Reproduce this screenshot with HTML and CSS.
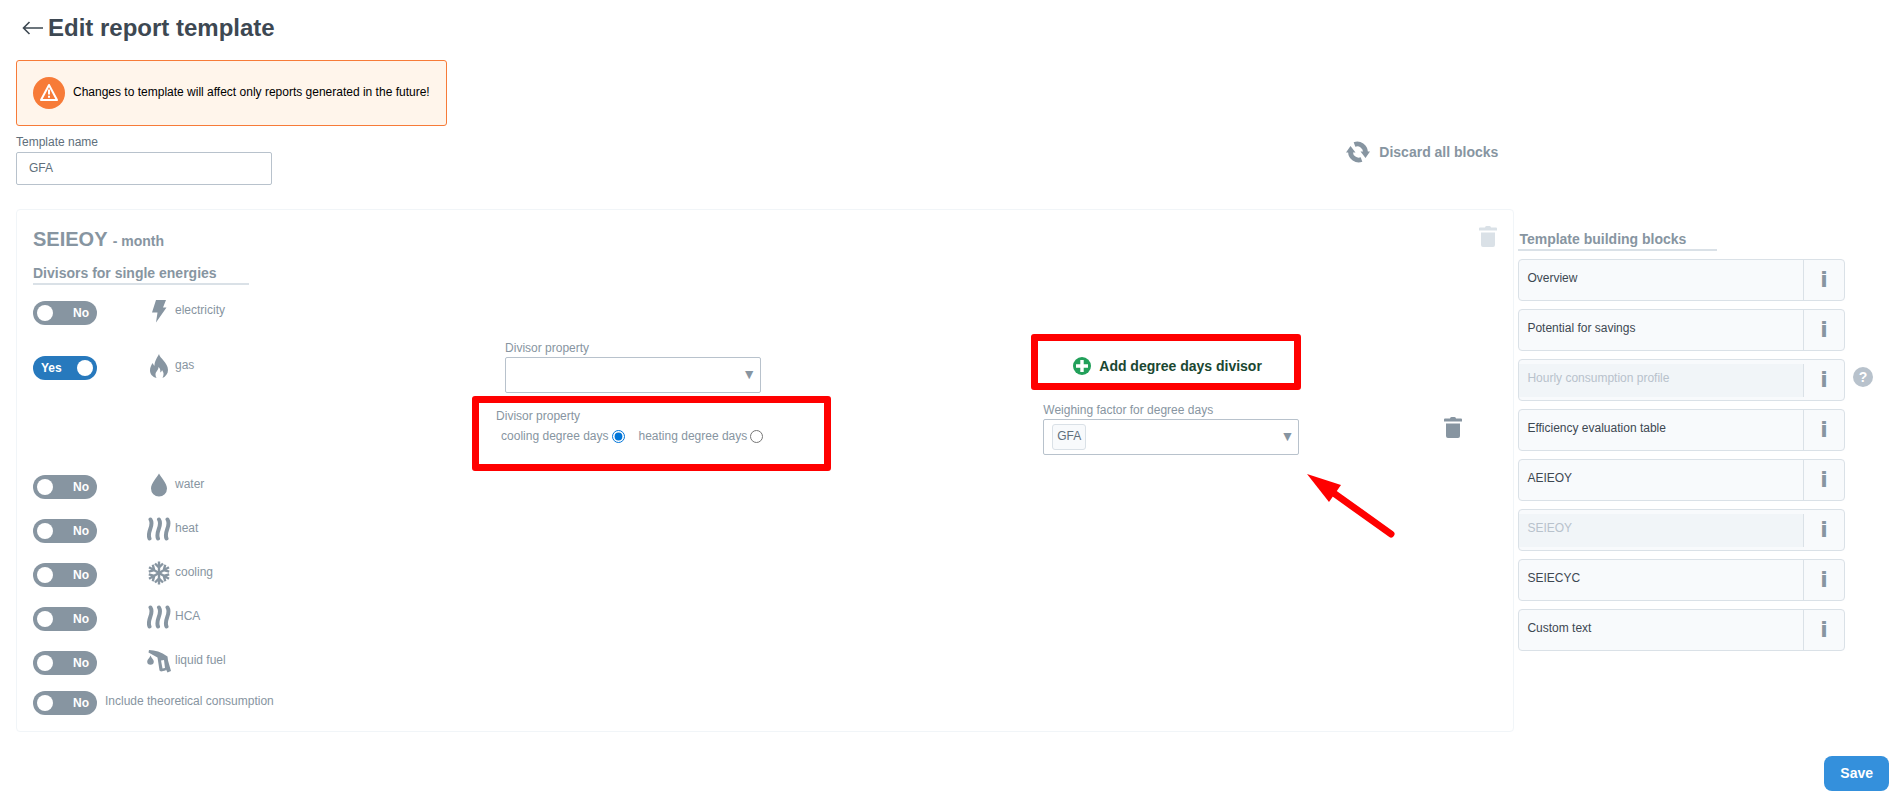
FILE: index.html
```
<!DOCTYPE html>
<html lang="en">
<head>
    <meta charset="UTF-8">
    <meta name="viewport" content="width=device-width, initial-scale=1.0">
    <title>Edit report template</title>
    <link rel="stylesheet" href="styles.css">
</head>
<body>
    <!-- Shared icons -->
    <svg class="icon-defs" aria-hidden="true">
        <symbol id="icon-trash" viewBox="0 0 18 21">
            <path d="M6 1.500Q6 0 7.500 0h3Q12 0 12 1.500h5q1 0 1 1V4.500H0V2.500q0-1 1-1zM2 6.500h14V19q0 2-2 2H4q-2 0-2-2z"/>
        </symbol>
        <symbol id="icon-waves" viewBox="0 0 24 24">
            <path d="M3.500 2.500c4 6-4 12-1 19M12 2.500c4 6-4 12-1 19M20.500 2.500c4 6-4 12-1 19" fill="none" stroke="currentColor" stroke-width="4" stroke-linecap="round"/>
        </symbol>
    </svg>

    <header class="page-header">
        <a class="back" href="#" aria-label="Back">
            <svg width="22" height="14" viewBox="0 0 22 14"><path d="M21 7H2M7.500 1L1.500 7l6 6" fill="none" stroke="currentColor" stroke-width="1.600"/></svg>
        </a>
        <h1>Edit report template</h1>
    </header>

    <div class="alert">
        <svg width="32" height="32" viewBox="0 0 32 32">
            <circle cx="16" cy="16" r="16" fill="#f77b38"/>
            <path d="M16 8L24 23H8z" fill="none" stroke="#fff" stroke-width="2" stroke-linejoin="round"/>
            <path d="M16 12.500v5M16 18.800v2" stroke="#fff" stroke-width="2"/>
        </svg>
        <p>Changes to template will affect only reports generated in the future!</p>
    </div>

    <div class="toolbar">
        <div class="field name-field">
            <label for="template_name">Template name</label>
            <input type="text" id="template_name" name="template_name" value="GFA">
        </div>
        <button type="button" class="link-button">
            <svg width="24" height="22" viewBox="0 0 24 22">
                <path d="M8.500 3.500A8.200 8.200 0 0 1 19.500 11M15.500 18.500A8.200 8.200 0 0 1 4.500 11" fill="none" stroke="currentColor" stroke-width="4.800"/>
                <path d="M14.500 10.500H24L19.500 17zM0 11.500h9.500L4.500 5z"/>
            </svg>
            Discard all blocks
        </button>
    </div>

    <div class="columns">
        <main class="panel">
            <div class="panel-header">
                <h2>SEIEOY <small>- month</small></h2>
                <button type="button" class="icon-button muted" aria-label="Remove block"><svg width="18" height="21"><use href="#icon-trash"/></svg></button>
            </div>
            <h3 class="section-title">Divisors for single energies</h3>

            <div class="energies">
                <div class="energy">
                    <label class="toggle"><input type="checkbox" aria-label="electricity"><span class="yes">Yes</span><span class="no">No</span></label>
                    <div class="energy-name">
                        <svg width="24" height="24" viewBox="0 0 24 24"><path d="M9 1h10l-3 7.500h3.500L9 23.500l1.500-10H5z"/></svg>
                        <span>electricity</span>
                    </div>
                </div>

                <div class="energy-group">
                    <div class="energy">
                        <label class="toggle"><input type="checkbox" aria-label="gas" checked><span class="yes">Yes</span><span class="no">No</span></label>
                        <div class="energy-name">
                            <svg width="24" height="24" viewBox="0 0 24 24"><path d="M12 0c.5 4 9 8.500 9 16 0 3.800-2.300 6.500-5.500 8 1.500-3 1.500-5.500-.5-8-.3 1.500-.8 2-1.700 2.400.3-2.200-.3-4.200-1.800-5.400 0 3.500-3 4.500-3 7.500 0 1.300.3 2.500 1 3.500C5.500 23 3 20 3 16.500c0-3 1.200-5.500 2.800-7.500.3 1.200.7 2 1.700 2.800C7.500 7 10.500 3 12 0z"/></svg>
                            <span>gas</span>
                        </div>
                        <div class="field property-field">
                            <label for="divisor_property">Divisor property</label>
                            <div class="select">
                                <select id="divisor_property" name="divisor_property"><option></option></select>
                            </div>
                        </div>
                        <div class="add-cell">
                            <button type="button" class="add-button">
                                <svg width="18" height="18" viewBox="0 0 18 18"><circle cx="9" cy="9" r="9" fill="#22a05a"/><path d="M9 3v12M3 9h12" stroke="#fff" stroke-width="3.400"/></svg>
                                Add degree days divisor
                            </button>
                            <span class="highlight"></span>
                        </div>
                    </div>

                    <div class="energy degree-days">
                        <fieldset>
                            <legend>Divisor property</legend>
                            <div class="radios">
                                <label>cooling degree days<input type="radio" name="degree_days" checked></label>
                                <label>heating degree days<input type="radio" name="degree_days"></label>
                            </div>
                            <span class="highlight"></span>
                        </fieldset>
                        <div class="field weight-field">
                            <label for="weight">Weighing factor for degree days</label>
                            <div class="select">
                                <select id="weight" name="weight"><option></option></select>
                                <span class="chip">GFA</span>
                            </div>
                            <svg class="pointer" width="90" height="66" viewBox="0 0 90 66"><path d="M28 20L84 60" stroke="#f00" stroke-width="7" stroke-linecap="round"/><path d="M0 0L34 11 22 28z" fill="#f00"/></svg>
                        </div>
                        <button type="button" class="icon-button" aria-label="Remove divisor"><svg width="18" height="21"><use href="#icon-trash"/></svg></button>
                    </div>
                </div>

                <div class="energy">
                    <label class="toggle"><input type="checkbox" aria-label="water"><span class="yes">Yes</span><span class="no">No</span></label>
                    <div class="energy-name">
                        <svg width="24" height="24" viewBox="0 0 24 24"><path d="M12 .500c2 4 8 9.500 8 15a8 8 0 0 1-16 0C4 10 10 4.500 12 .500z"/></svg>
                        <span>water</span>
                    </div>
                </div>
                <div class="energy">
                    <label class="toggle"><input type="checkbox" aria-label="heat"><span class="yes">Yes</span><span class="no">No</span></label>
                    <div class="energy-name">
                        <svg width="24" height="24"><use href="#icon-waves"/></svg>
                        <span>heat</span>
                    </div>
                </div>
                <div class="energy">
                    <label class="toggle"><input type="checkbox" aria-label="cooling"><span class="yes">Yes</span><span class="no">No</span></label>
                    <div class="energy-name">
                        <svg width="24" height="24" viewBox="0 0 24 24">
                            <g fill="none" stroke="currentColor" stroke-width="2.400">
                                <path d="M12 .500v23M8 2.500l4 4 4-4M8 21.500l4-4 4 4"/>
                                <path d="M12 .500v23M8 2.500l4 4 4-4M8 21.500l4-4 4 4" transform="rotate(60 12 12)"/>
                                <path d="M12 .500v23M8 2.500l4 4 4-4M8 21.500l4-4 4 4" transform="rotate(120 12 12)"/>
                            </g>
                        </svg>
                        <span>cooling</span>
                    </div>
                </div>
                <div class="energy">
                    <label class="toggle"><input type="checkbox" aria-label="HCA"><span class="yes">Yes</span><span class="no">No</span></label>
                    <div class="energy-name">
                        <svg width="24" height="24"><use href="#icon-waves"/></svg>
                        <span>HCA</span>
                    </div>
                </div>
                <div class="energy">
                    <label class="toggle"><input type="checkbox" aria-label="liquid fuel"><span class="yes">Yes</span><span class="no">No</span></label>
                    <div class="energy-name">
                        <svg width="24" height="24" viewBox="0 0 24 24">
                            <path d="M3.500 6.500c.8 2.500 3.300 4 3.300 6a3.300 3.300 0 0 1-6.600 0c0-2 2.500-3.500 3.300-6z"/>
                            <path fill-rule="evenodd" d="M2 1c6 0 12 2 18.500 6.500l.5 4 3 10.500-3.500 1.500-1.500-3-.5 1-4.500 1-1.500-1L10.500 8.500 1.500 3.500zM14 11.500l1.500 8 2.500-.5-1-8z"/>
                        </svg>
                        <span>liquid fuel</span>
                    </div>
                </div>
            </div>

            <div class="option">
                <label class="toggle"><input type="checkbox" id="theoretical"><span class="yes">Yes</span><span class="no">No</span></label>
                <label class="option-name" for="theoretical">Include theoretical consumption</label>
            </div>
        </main>

        <aside class="sidebar">
            <h3 class="section-title">Template building blocks</h3>
            <ul class="blocks">
                <li><div class="block"><button type="button" class="block-name">Overview</button><button type="button" class="info">i</button></div></li>
                <li><div class="block"><button type="button" class="block-name">Potential for savings</button><button type="button" class="info">i</button></div></li>
                <li><div class="block"><button type="button" class="block-name" disabled>Hourly consumption profile</button><button type="button" class="info">i</button></div><button type="button" class="help">?</button></li>
                <li><div class="block"><button type="button" class="block-name">Efficiency evaluation table</button><button type="button" class="info">i</button></div></li>
                <li><div class="block"><button type="button" class="block-name">AEIEOY</button><button type="button" class="info">i</button></div></li>
                <li><div class="block"><button type="button" class="block-name" disabled>SEIEOY</button><button type="button" class="info">i</button></div></li>
                <li><div class="block"><button type="button" class="block-name">SEIECYC</button><button type="button" class="info">i</button></div></li>
                <li><div class="block"><button type="button" class="block-name">Custom text</button><button type="button" class="info">i</button></div></li>
            </ul>
        </aside>
    </div>

    <footer class="page-footer">
        <button type="button" class="save">Save</button>
    </footer>
</body>
</html>
```

FILE: styles.css
```
* {
    box-sizing: border-box;
}
body {
    font-family: Arial, "Liberation Sans", sans-serif;
    font-size: 12px;
    line-height: 14px;
    margin: 0;
    padding: 12px 5px 0 16px;
    color: #8795a1;
    background-color: #fff;
}
h1, h2, h3, p, ul {
    margin: 0;
    padding: 0;
}
button, input, select {
    font: inherit;
    color: inherit;
    margin: 0;
}
button {
    padding: 0;
    border: none;
    background: none;
    cursor: pointer;
}
svg {
    display: block;
    flex: none;
    fill: currentColor;
}
.icon-defs {
    position: absolute;
    width: 0;
    height: 0;
}

/* Header */
.page-header {
    display: flex;
    align-items: center;
    gap: 4px;
    padding-left: 6px;
    color: #3d4852;
}
.page-header h1 {
    font-size: 24px;
    line-height: 32px;
}
.back {
    color: inherit;
}
.alert {
    display: flex;
    align-items: center;
    gap: 8px;
    width: fit-content;
    margin-top: 16px;
    padding: 16px;
    border: 1px solid #f77b38;
    border-radius: 3px;
    background-color: #fff5eb;
    color: #000;
}
.alert p {
    padding-bottom: 2px;
}

/* Template name */
.toolbar {
    display: flex;
    justify-content: space-between;
    align-items: start;
    width: 80%;
    margin: 9px 0 24px;
    padding-right: 16px;
}
.field {
    display: flex;
    flex-direction: column;
    gap: 2px;
    width: 256px;
}
.name-field {
    gap: 3px;
    color: #606f7b;
}
.name-field input {
    height: 33px;
    padding: 0 12px 2px;
    border: 1px solid #b8c2cc;
    border-radius: 2px;
}
.link-button {
    display: flex;
    align-items: center;
    gap: 9px;
    margin-top: 6px;
    font-size: 14px;
    font-weight: bold;
}

/* Block panel */
.columns {
    display: grid;
    grid-template-columns: 4fr 1fr;
}
.panel {
    padding: 16px;
    border: 1px solid #f1f5f8;
    border-radius: 4px;
}
.panel-header {
    display: flex;
    justify-content: space-between;
}
.panel-header h2 {
    padding-top: 1px;
    font-size: 20px;
    line-height: 24px;
}
.panel-header small {
    font-size: 14px;
    line-height: 14px;
}
.icon-button {
    align-self: start;
    width: 18px;
}
.muted {
    color: #dae1e7;
}
.section-title {
    width: 216px;
    padding-bottom: 2px;
    border-bottom: 2px solid #dae1e7;
    font-size: 14px;
    line-height: 16px;
}
.panel .section-title {
    margin: 14px 0;
}
.energies {
    display: flex;
    flex-direction: column;
    gap: 16px;
}
.energy-group {
    display: flex;
    flex-direction: column;
    gap: 10px;
}
.energy {
    display: grid;
    grid-template-columns: 114px 349fr 547fr 401fr 53px;
    align-items: center;
    min-height: 28px;
}
.energy-name {
    display: flex;
    align-items: center;
    gap: 4px;
    padding-bottom: 4px;
}
.energy-name span {
    padding-bottom: 3px;
}
.toggle {
    display: flex;
    align-items: center;
    justify-content: space-between;
    width: 64px;
    height: 24px;
    padding: 0 8px 0 4px;
    border-radius: 12px;
    background-color: #8795a1;
    color: #fff;
    font-weight: bold;
    cursor: pointer;
}
.toggle input {
    appearance: none;
    width: 16px;
    height: 16px;
    border-radius: 50%;
    background-color: #fff;
}
.toggle:has(input:checked) {
    flex-direction: row-reverse;
    padding: 0 4px 0 8px;
    background-color: #2779bd;
}
.toggle .yes, .toggle input:checked ~ .no {
    display: none;
}
.toggle input:checked ~ .yes {
    display: inline;
}

/* Divisor fields */
.property-field {
    margin: -2px 0 0 9px;
}
.select {
    position: relative;
}
.select select {
    appearance: none;
    display: block;
    width: 100%;
    height: 36px;
    padding: 0 12px;
    border: 1px solid #b8c2cc;
    border-radius: 2px;
    background-color: #fff;
}
.select::after {
    content: "▼";
    position: absolute;
    top: 10px;
    right: 5px;
    font-size: 14px;
    pointer-events: none;
}
.chip {
    position: absolute;
    top: 5px;
    left: 9px;
    padding: 4px 4px 6px;
    border: 1px solid #dae1e7;
    border-radius: 3px;
    background-color: #f8fafc;
    color: #606f7b;
}
.add-cell, .degree-days fieldset, .weight-field {
    position: relative;
}
.add-cell {
    padding: 0 0 4px 30px;
}
.add-button {
    display: flex;
    align-items: center;
    gap: 8px;
    color: #1a4731;
    font-size: 14px;
    font-weight: bold;
}
.highlight {
    position: absolute;
    border: 7px solid #f00;
    border-radius: 3px;
    pointer-events: none;
}
.add-cell .highlight {
    top: -23px;
    left: -12px;
    width: 270px;
    height: 56px;
}
.degree-days {
    align-items: start;
    min-height: 54px;
}
.degree-days fieldset {
    grid-column: 3;
    margin: 0;
    padding: 6px 0 0;
    border: none;
}
.degree-days legend {
    float: left;
    width: 100%;
    padding: 0;
}
.radios {
    display: flex;
    gap: 14px;
    padding: 6px 0 0 5px;
    clear: both;
}
.radios label {
    display: flex;
    align-items: center;
    gap: 3px;
}
.radios input {
    width: 13px;
    height: 13px;
    accent-color: #0075d8;
}
.degree-days fieldset .highlight {
    top: -7px;
    left: -24px;
    width: 359px;
    height: 75px;
}
.pointer {
    position: absolute;
    top: 71px;
    left: 264px;
}
.degree-days .icon-button {
    padding-top: 14px;
}
.option {
    display: flex;
    gap: 8px;
    margin-top: 14px;
}
.option-name {
    padding-top: 3px;
}

/* Building blocks */
.sidebar {
    padding: 22px 0 0 4px;
}
.sidebar .section-title {
    width: 199px;
    padding-left: 1px;
}
.blocks {
    display: flex;
    flex-direction: column;
    gap: 8px;
    margin-top: 8px;
    list-style: none;
}
.blocks li {
    display: grid;
    grid-template-columns: 1fr 36px;
    gap: 8px;
}
.block {
    display: flex;
    align-items: center;
    height: 42px;
    border: 1px solid #dae1e7;
    border-radius: 4px;
    background-color: #f8fafc;
}
.block-name {
    flex: 1;
    height: 100%;
    padding: 0 8px 4px;
    border-right: 1px solid #dae1e7;
    color: #3d4852;
    text-align: left;
}
.block-name:disabled {
    height: 33px;
    background-color: #f1f5f8;
    color: #b8c2cc;
    cursor: default;
}
.info {
    width: 40px;
    font-family: "DejaVu Sans", sans-serif;
    font-size: 22px;
    font-weight: bold;
    line-height: 40px;
}
.help {
    align-self: center;
    width: 20px;
    height: 20px;
    margin-bottom: 6px;
    border-radius: 50%;
    background-color: #b8c2cc;
    color: #fff;
    font-size: 14px;
    font-weight: bold;
}

/* Footer */
.page-footer {
    display: flex;
    justify-content: flex-end;
    margin-top: 24px;
}
.save {
    padding: 9px 16px;
    border-radius: 8px;
    background-color: #3490dc;
    color: #fff;
    font-size: 14px;
    font-weight: bold;
    line-height: 17px;
}
```
